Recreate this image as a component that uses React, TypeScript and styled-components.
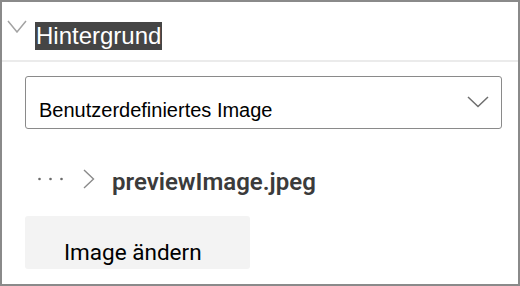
import React from "react";
import styled, { createGlobalStyle } from "styled-components";

const Global = createGlobalStyle`
  html, body { margin: 0; padding: 0; background: #ffffff; }
  body { font-family: "Liberation Sans", Arial, sans-serif; }
`;

const Frame = styled.div`
  box-sizing: border-box;
  width: 520px;
  height: 286px;
  border: 2px solid #8a8a8a;
  background: #ffffff;
  display: flex;
  flex-direction: column;
  overflow: hidden;
`;

const Header = styled.div`
  box-sizing: border-box;
  height: 60px;
  padding: 20px 0 0 5px;
  display: flex;
  align-items: flex-start;
  border-bottom: 2px solid #ebebeb;
`;

const CollapseIcon = styled.svg`
  display: block;
  margin-top: -2px;
  flex: none;
`;

const HeaderTitle = styled.span`
  margin-left: 8px;
  padding: 0 1px;
  background: #454545;
  color: #ffffff;
  font-family: "Liberation Sans", Arial, sans-serif;
  font-size: 24px;
  line-height: 28px;
  white-space: nowrap;
`;

const Main = styled.div`
  display: flex;
  flex-direction: column;
  align-items: flex-start;
  padding: 14px 0 0 23px;
`;

const Dropdown = styled.div`
  box-sizing: border-box;
  width: 477px;
  height: 53px;
  border: 1px solid #8a8a8a;
  border-radius: 3px;
  padding: 19px 12px 0 13px;
  display: flex;
  justify-content: space-between;
  align-items: flex-start;
  background: #ffffff;
`;

const SelectValue = styled.span`
  font-family: "Liberation Sans", Arial, sans-serif;
  font-size: 20px;
  line-height: 28px;
  color: #000000;
  white-space: nowrap;
`;

const DropIcon = styled.svg`
  display: block;
  flex: none;
`;

const Breadcrumb = styled.div`
  margin-top: 39px;
  height: 28px;
  display: flex;
  align-items: flex-start;
`;

const MoreDots = styled.svg`
  display: block;
  margin: 8.5px 0 0 13px;
`;

const CrumbChevron = styled.svg`
  display: block;
  margin: 1px 0 0 20px;
`;

const FileName = styled.span`
  margin-left: 17px;
  font-family: Roboto, "Liberation Sans", Arial, sans-serif;
  font-size: 24px;
  font-weight: 600;
  line-height: 28px;
  color: #3b3b3b;
  white-space: nowrap;
`;

const ActionButton = styled.button`
  margin-top: 20px;
  box-sizing: border-box;
  width: 225px;
  height: 53px;
  border: none;
  border-radius: 3px;
  background: #f3f3f3;
  padding: 22px 0 0 39px;
  display: flex;
  align-items: flex-start;
  font: inherit;
  color: #000;
  cursor: pointer;
  appearance: none;
`;

const ButtonText = styled.span`
  font-family: Roboto, "Liberation Sans", Arial, sans-serif;
  font-size: 22.5px;
  line-height: 28px;
  color: #000000;
  white-space: nowrap;
`;

export default function App() {
  return (
    <>
      <Global />
      <Frame>
        <Header>
          <CollapseIcon width="20" height="13" viewBox="0 0 20 13">
            <polyline points="1,1 10,12 19,1" fill="none" stroke="#a3a3a3" strokeWidth="1.5" />
          </CollapseIcon>
          <HeaderTitle>Hintergrund</HeaderTitle>
        </Header>
        <Main>
          <Dropdown>
            <SelectValue>Benutzerdefiniertes Image</SelectValue>
            <DropIcon width="22" height="12" viewBox="0 0 22 12">
              <polyline points="1,1 11,10.5 21,1" fill="none" stroke="#6e6e6e" strokeWidth="1.5" />
            </DropIcon>
          </Dropdown>
          <Breadcrumb>
            <MoreDots width="25" height="4" viewBox="0 0 25 4">
              <circle cx="1.5" cy="2" r="1.3" fill="#6b6b6b" />
              <circle cx="12.5" cy="2" r="1.3" fill="#6b6b6b" />
              <circle cx="23.5" cy="2" r="1.3" fill="#6b6b6b" />
            </MoreDots>
            <CrumbChevron width="12" height="20" viewBox="0 0 12 20">
              <polyline points="1,1 10.5,10 1,19" fill="none" stroke="#8a8a8a" strokeWidth="1.4" />
            </CrumbChevron>
            <FileName>previewImage.jpeg</FileName>
          </Breadcrumb>
          <ActionButton type="button">
            <ButtonText>Image ändern</ButtonText>
          </ActionButton>
        </Main>
      </Frame>
    </>
  );
}
